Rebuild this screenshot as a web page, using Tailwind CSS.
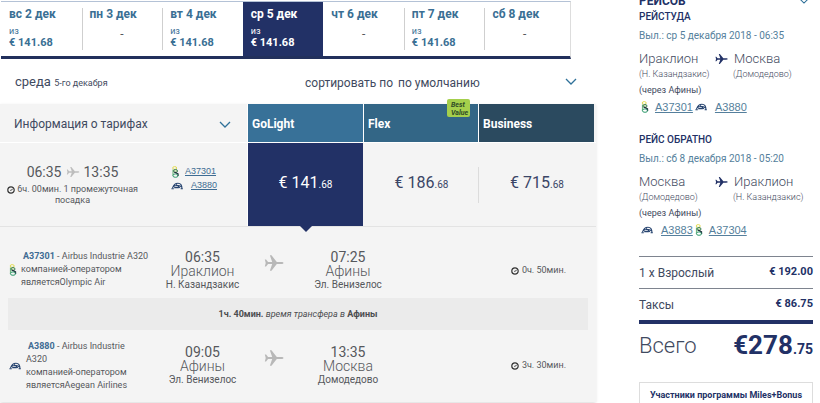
<!DOCTYPE html>
<html lang="ru">
<head>
  <meta charset="UTF-8">
  <title>Выбор рейса</title>
  <meta name="viewport" content="width=device-width, initial-scale=1" />
  <script src="https://cdn.jsdelivr.net/npm/@tailwindcss/browser@4"></script>
</head>
<body class="bg-white font-[Roboto,sans-serif] text-[#56585c] overflow-x-hidden">

  <!-- Shared icons -->
  <svg class="hidden">
    <symbol id="plane" viewBox="0 0 22 20">
      <path d="M21.500 10c0 .7-.9 1.100-2.200 1.100h-5.200L8.200 18.500H6.400L9 11.100H4.400L2.200 14H.8l1-4-1-4h1.400l2.200 2.900H9L6.400 1.500h1.800l5.900 7.400h5.200c1.300 0 2.200.4 2.200 1.100z" fill="currentColor" />
    </symbol>
    <symbol id="clock" viewBox="0 0 8 8">
      <circle cx="4" cy="4" r="3.200" fill="none" stroke="currentColor" stroke-width="1.200" />
      <path d="M3.300 4.300h1L5.600 2.800" fill="none" stroke="currentColor" stroke-width="1" />
    </symbol>
    <symbol id="chevron" viewBox="0 0 12 7">
      <path d="M1 1l5 5 5-5" fill="none" stroke="#2f7199" stroke-width="1.300" />
    </symbol>
    <symbol id="olympic" viewBox="0 0 8 12">
      <ellipse cx="3.200" cy="2" rx="2" ry="1.400" fill="none" stroke="#e3dc55" stroke-width="1" />
      <path d="M1.500 3.500v6" stroke="#79b884" stroke-width="1.200" />
      <ellipse cx="4" cy="5" rx="2" ry="1.500" fill="#d5e8bb" stroke="#3d7f57" stroke-width="1" />
      <path d="M3 6l3.500 2v2" fill="none" stroke="#22283c" stroke-width="1.300" />
      <ellipse cx="4" cy="9.600" rx="2.600" ry="1.700" fill="none" stroke="#2f9a6c" stroke-width="1" />
    </symbol>
    <symbol id="aegean" viewBox="0 0 12 8">
      <path d="M.4 6.800h2.400M1.500 6C2.500 2.800 4.600 1.200 7 1.200c2.600 0 4 2 4 5.600M9.600 6.800h2.200M2 4.800C4.200 3.200 8 3.200 10.600 4.800M3.200 5.600h4.600M5 2.400l4 3.400" fill="none" stroke="#26436f" stroke-width="1.100" />
    </symbol>
  </svg>

  <div class="flex gap-[43px] pl-px pr-[7px] pt-px">

    <main class="flex-1 min-w-0">

      <!-- Day tabs -->
      <nav class="mr-[25px] grid grid-cols-7 h-[58px] pr-[5px] border-t border-r border-t-[#b4c2d6] border-r-[#dddddd] border-b-3 border-b-[#22305c] text-[#3a6f94] text-[12px] font-bold">
        <button class="flex flex-col items-start text-left pl-2 pt-1 leading-4 relative">вс 2 дек
          <span class="text-[9px] leading-3 font-normal pt-[3px]">из</span><span class="text-[11px] leading-3">€ 141.68</span>
        </button>
        <button class="flex flex-col items-start text-left pl-2 pt-1 leading-4 relative before:absolute before:left-0 before:top-1.5 before:h-[42px] before:w-px before:bg-[#cfcfcf]">пн 3 дек
          <span class="self-center pr-2 pt-1 text-[#56585c] font-normal">-</span>
        </button>
        <button class="flex flex-col items-start text-left pl-2 pt-1 leading-4 relative before:absolute before:left-0 before:top-1.5 before:h-[42px] before:w-px before:bg-[#cfcfcf]">вт 4 дек
          <span class="text-[9px] leading-3 font-normal pt-[3px]">из</span><span class="text-[11px] leading-3">€ 141.68</span>
        </button>
        <button class="flex flex-col items-start text-left pl-2 pt-1 leading-4 bg-[#223166] text-white">ср 5 дек
          <span class="text-[9px] leading-3 font-normal pt-[3px]">из</span><span class="text-[11px] leading-3">€ 141.68</span>
        </button>
        <button class="flex flex-col items-start text-left pl-2 pt-1 leading-4">чт 6 дек
          <span class="self-center pr-2 pt-1 text-[#56585c] font-normal">-</span>
        </button>
        <button class="flex flex-col items-start text-left pl-2 pt-1 leading-4 relative before:absolute before:left-0 before:top-1.5 before:h-[42px] before:w-px before:bg-[#cfcfcf]">пт 7 дек
          <span class="text-[9px] leading-3 font-normal pt-[3px]">из</span><span class="text-[11px] leading-3">€ 141.68</span>
        </button>
        <button class="flex flex-col items-start text-left pl-2 pt-1 leading-4 relative before:absolute before:left-0 before:top-1.5 before:h-[42px] before:w-px before:bg-[#cfcfcf]">сб 8 дек
          <span class="self-center pr-2 pt-1 text-[#56585c] font-normal">-</span>
        </button>
      </nav>

      <!-- Date and sorting -->
      <div class="flex items-center h-[45px] pl-[14px] pr-[19px] pt-px text-[#3f4a60]">
        <h2 class="w-[290px] text-[13px]">среда <small class="text-[9px]">5-го декабря</small></h2>
        <label for="sort" class="text-[12px] pr-[5px] pt-0.5">сортировать по</label>
        <div class="relative flex-1">
          <select id="sort" class="appearance-none w-full text-[12px] bg-transparent">
            <option>по умолчанию</option>
          </select>
          <svg class="absolute right-0 top-2 w-3 h-[7px] pointer-events-none"><use href="#chevron" /></svg>
        </div>
      </div>

      <!-- Flight card -->
      <section class="bg-[#f4f4f4] shadow pb-1 -ml-px">

        <!-- Fare names -->
        <div class="grid grid-cols-[247fr_116fr_115fr_116fr] h-[39px] pr-0.5 border-b border-white">
          <button class="flex items-center justify-between pl-[14px] pr-4 pt-0.5 text-[12px] text-[#3f4a60]">Информация о тарифах
            <svg class="w-3 h-[7px]"><use href="#chevron" /></svg>
          </button>
          <div class="flex items-center pl-1 pt-0.5 bg-[#387198] border-l border-white text-white text-[12px] font-bold">GoLight</div>
          <div class="relative flex items-center pl-1 pt-0.5 bg-[#336686] border-l border-white text-white text-[12px] font-bold">Flex
            <span class="absolute -top-[5px] right-2 w-[23px] h-[18px] pl-1 pt-0.5 rounded-xs bg-[#a5cf4c] text-[#2d4a26] text-[7px] leading-2 italic">Best Value</span>
          </div>
          <div class="flex items-center pl-1 pt-0.5 bg-[#2b4a5f] border-l border-white text-white text-[12px] font-bold">Business</div>
        </div>

        <!-- Summary and prices -->
        <div class="grid grid-cols-[247fr_116fr_115fr_116fr] h-[84px] pr-0.5 border-b border-[#e3e3e3]">
          <div class="flex">
            <div class="w-[145px] pt-[19px] text-center">
              <p class="flex items-center justify-center gap-1 text-[14px] leading-5">06:35 <svg class="w-[14px] h-3 text-[#bdbdbd]"><use href="#plane" /></svg> 13:35</p>
              <p class="text-[9px] leading-[11px] pt-0.5"><svg class="inline w-2 h-2 text-[#333333]"><use href="#clock" /></svg> 6ч. 00мин. 1 промежуточная посадка</p>
            </div>
            <div class="pt-[22px] pl-[26px] font-['Liberation_Sans',sans-serif] text-[9px] text-[#3e6c93]">
              <p class="flex items-center h-[14px] gap-[5px]"><svg class="w-[9px] h-3"><use href="#olympic" /></svg><a href="#" class="underline">A37301</a></p>
              <p class="flex items-center h-[14px] gap-2"><svg class="w-3 h-2"><use href="#aegean" /></svg><a href="#" class="underline">A3880</a></p>
            </div>
          </div>
          <button class="relative flex items-center justify-center bg-[#223166] border-l border-white text-white text-[16px]">
            <span class="pb-1">€ 141<span class="text-[10px]">.68</span></span>
            <svg class="absolute -bottom-1.5 left-1/2 -translate-x-1/2 w-[14px] h-[7px]" viewBox="0 0 14 7"><path d="M0 0h14L7 7z" fill="#223166" /></svg>
          </button>
          <button class="flex items-center justify-center text-[16px] text-[#3a4566]">
            <span class="pb-1 pl-0.5">€ 186<span class="text-[10px]">.68</span></span>
          </button>
          <button class="relative flex items-center justify-center text-[16px] text-[#3a4566] before:absolute before:left-0 before:top-6 before:h-9 before:w-px before:bg-[#dcdcdc]">
            <span class="pb-1 pl-0.5">€ 715<span class="text-[10px]">.68</span></span>
          </button>
        </div>

        <!-- First leg -->
        <div class="flex h-[71px] text-center">
          <div class="w-[145px] flex items-center gap-1 pl-[9px] pt-3.5 text-left text-[9px] leading-[13px]">
            <svg class="w-2 h-3 shrink-0"><use href="#olympic" /></svg>
            <p class="whitespace-nowrap"><b class="text-[#3e6c93] pl-0.5">A37301</b> - Airbus Industrie A320<br>компанией-оператором<br>являетсяOlympic Air</p>
          </div>
          <div class="w-[115px] pt-[23px]">
            <p class="text-[14px] leading-[14px]">06:35</p>
            <p class="text-[14px] leading-[14px] font-light">Ираклион</p>
            <p class="text-[10px] leading-[14px]">Н. Казандзакис</p>
          </div>
          <div class="w-7 pt-[27px] flex justify-center"><svg class="w-[22px] h-[18px] text-[#b8b8b8]"><use href="#plane" /></svg></div>
          <div class="w-[120px] pt-[23px]">
            <p class="text-[14px] leading-[14px]">07:25</p>
            <p class="text-[14px] leading-[14px] font-light">Афины</p>
            <p class="text-[10px] leading-[14px]">Эл. Венизелос</p>
          </div>
          <p class="flex-1 flex items-center justify-end gap-[3px] pr-[30px] pt-4 text-[9px]"><svg class="w-2 h-2 text-[#333333]"><use href="#clock" /></svg>0ч. 50мин.</p>
        </div>

        <p class="mx-2 h-8 leading-8 bg-[#ebebeb] text-center text-[9px] text-[#4b4d50]"><b>1ч. 40мин.</b> <i>время трансфера в</i> <b>Афины</b></p>

        <!-- Second leg -->
        <div class="flex h-[68px] text-center">
          <div class="w-[145px] flex items-center gap-[5px] pl-[9px] pt-1 text-left text-[9px] leading-[13px]">
            <svg class="w-3 h-2 shrink-0"><use href="#aegean" /></svg>
            <p class="w-[105px]"><b class="text-[#3e6c93] pl-0.5">A3880</b> - Airbus Industrie A320<br>компанией-оператором<br>являетсяAegean Airlines</p>
          </div>
          <div class="w-[115px] pt-[15px]">
            <p class="text-[14px] leading-[14px]">09:05</p>
            <p class="text-[14px] leading-[14px] font-light">Афины</p>
            <p class="text-[10px] leading-[14px]">Эл. Венизелос</p>
          </div>
          <div class="w-7 pt-[19px] flex justify-center"><svg class="w-[22px] h-[18px] text-[#b8b8b8]"><use href="#plane" /></svg></div>
          <div class="w-[120px] pt-[15px]">
            <p class="text-[14px] leading-[14px]">13:35</p>
            <p class="text-[14px] leading-[14px] font-light">Москва</p>
            <p class="text-[10px] leading-[14px]">Домодедово</p>
          </div>
          <p class="flex-1 flex items-center justify-end gap-[3px] pr-[30px] pt-1 text-[9px]"><svg class="w-2 h-2 text-[#333333]"><use href="#clock" /></svg>3ч. 30мин.</p>
        </div>
      </section>
    </main>

    <!-- Booking summary -->
    <aside class="w-[174px] text-[#3f4a60] -mt-2">
      <h2 class="flex justify-between items-center pr-1 text-[12px] leading-4 font-bold text-[#223166]">РЕЙСОВ
        <svg class="w-2.5 h-1.5"><use href="#chevron" /></svg>
      </h2>

      <h3 class="text-[10px] leading-4 font-medium text-[#223166]">РЕЙСТУДА</h3>
      <p class="text-[10px] leading-5 pt-px text-[#557f9c]">Выл.: ср 5 декабря 2018 - 06:35</p>
      <div class="grid grid-cols-[76px_1fr] pt-[5px] pb-px">
        <p class="text-[13px] leading-4 font-light">Ираклион</p>
        <p class="flex items-center gap-1.5 text-[13px] leading-4 font-light"><svg class="w-[13px] h-3 shrink-0 text-[#223166]"><use href="#plane" /></svg>Москва</p>
        <p class="text-[9px] leading-[14px] font-light">(Н. Казандзакис)</p>
        <p class="text-[9px] leading-[14px] font-light pl-[18px] whitespace-nowrap">(Домодедово)</p>
      </div>
      <p class="text-[9px] leading-4">(через Афины)</p>
      <p class="flex items-center h-[18px] pl-0.5 font-['Liberation_Sans',sans-serif] text-[11px] text-[#557f9c]">
        <svg class="w-2 h-3 mr-1.5"><use href="#olympic" /></svg><a href="#" class="underline">A37301</a>
        <svg class="w-3 h-2 ml-0.5 mr-2"><use href="#aegean" /></svg><a href="#" class="underline">A3880</a>
      </p>

      <h3 class="text-[10px] leading-4 pt-4 font-medium text-[#223166]">РЕЙС ОБРАТНО</h3>
      <p class="text-[10px] leading-5 pt-px text-[#557f9c]">Выл.: сб 8 декабря 2018 - 05:20</p>
      <div class="grid grid-cols-[76px_1fr] pt-[5px] pb-px">
        <p class="text-[13px] leading-4 font-light">Москва</p>
        <p class="flex items-center gap-1.5 text-[13px] leading-4 font-light"><svg class="w-[13px] h-3 shrink-0 text-[#223166]"><use href="#plane" /></svg>Ираклион</p>
        <p class="text-[9px] leading-[14px] font-light">(Домодедово)</p>
        <p class="text-[9px] leading-[14px] font-light pl-[18px] whitespace-nowrap">(Н. Казандзакис)</p>
      </div>
      <p class="text-[9px] leading-4">(через Афины)</p>
      <p class="flex items-center h-[18px] pl-0.5 font-['Liberation_Sans',sans-serif] text-[11px] text-[#557f9c]">
        <svg class="w-3 h-2 mr-2"><use href="#aegean" /></svg><a href="#" class="underline">A3883</a>
        <svg class="w-2 h-3 ml-0.5 mr-1.5"><use href="#olympic" /></svg><a href="#" class="underline">A37304</a>
      </p>

      <!-- Totals -->
      <dl class="mt-[17px] text-[12px]">
        <div class="flex justify-between items-center h-8 border-t border-[#7e848f]"><dt>1 x Взрослый</dt><dd class="text-[11px] font-bold text-[#223166]">€ 192.00</dd></div>
        <div class="flex justify-between items-center h-8 border-t border-[#7e848f]"><dt>Таксы</dt><dd class="text-[11px] font-bold text-[#223166]">€ 86.75</dd></div>
        <div class="flex justify-between items-center h-[46px] border-t-4 border-[#223166] text-[22px]">
          <dt class="font-light">Всего</dt>
          <dd class="font-bold text-[#223166] text-[26px]">€278<span class="text-[14px]">.75</span></dd>
        </div>
      </dl>

      <a href="#" class="block mt-4 h-[22px] border border-b-0 border-[#dddddd] text-center whitespace-nowrap text-[9px] leading-6 font-bold text-[#223166]">Участники программы Miles+Bonus</a>
    </aside>
  </div>

</body>
</html>
